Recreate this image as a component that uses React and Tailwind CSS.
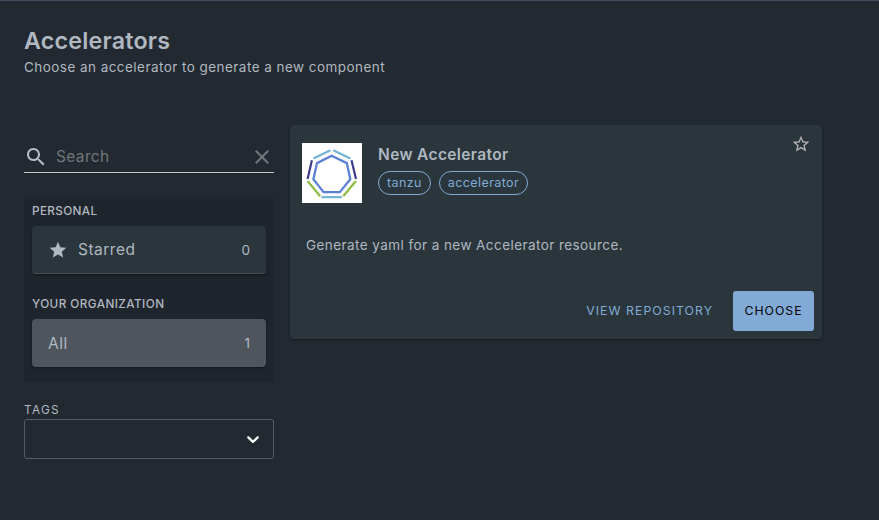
import React from 'react';

function SearchIcon() {
  return (
    <svg className="size-6 shrink-0 fill-[#b5bdc5]" viewBox="0 0 24 24">
      <path d="M15.5 14h-.79l-.28-.27C15.41 12.59 16 11.11 16 9.5 16 5.91 13.09 3 9.5 3S3 5.91 3 9.5 5.91 16 9.5 16c1.61 0 3.09-.59 4.23-1.57l.27.28v.79l5 4.99L20.49 19l-4.99-5zm-6 0C7.01 14 5 11.99 5 9.5S7.01 5 9.5 5 14 7.01 14 9.5 11.99 14 9.5 14z" />
    </svg>
  );
}

function ClearIcon() {
  return (
    <svg className="size-6 shrink-0 fill-[#70777d]" viewBox="0 0 24 24">
      <path d="M19 6.41L17.59 5 12 10.59 6.41 5 5 6.41 10.59 12 5 17.59 6.41 19 12 13.41 17.59 19 19 17.59 13.41 12z" />
    </svg>
  );
}

function StarIcon() {
  return (
    <svg className="size-5 shrink-0 fill-[#b0b8c1]" viewBox="0 0 24 24">
      <path d="M12 17.27L18.18 21l-1.64-7.03L22 9.24l-7.19-.61L12 2 9.19 8.63 2 9.24l5.46 4.73L5.82 21z" />
    </svg>
  );
}

function StarBorderIcon() {
  return (
    <svg className="size-5 shrink-0 fill-[#b3b3b3]" viewBox="0 0 24 24">
      <path d="M22 9.24l-7.19-.62L12 2 9.19 8.63 2 9.24l5.46 4.73L5.82 21 12 17.27 18.18 21l-1.63-7.03L22 9.24zM12 15.4l-3.76 2.27 1-4.28-3.32-2.88 4.38-.38L12 6.1l1.71 4.04 4.38.38-3.32 2.88 1 4.28L12 15.4z" />
    </svg>
  );
}

function ChevronIcon() {
  return (
    <svg className="size-5 shrink-0 fill-white" viewBox="0 0 20 20">
      <path d="M4.516 7.548c0.436-0.446 1.043-0.481 1.576 0l3.908 3.747 3.908-3.747c0.533-0.481 1.141-0.446 1.574 0 0.436 0.445 0.408 1.197 0 1.615-0.406 0.418-4.695 4.502-4.695 4.502-0.217 0.223-0.502 0.335-0.787 0.335s-0.57-0.112-0.789-0.335c0 0-4.287-4.084-4.695-4.502s-0.436-1.17 0-1.615z" />
    </svg>
  );
}

function TanzuLogo() {
  return (
    <svg className="size-[60px] shrink-0 bg-white" viewBox="0 0 60 60" fill="none" strokeWidth="2.2">
      <path d="M29.6 12.8L44.8 20.1L48.3 36.2L37.8 49.2H21.6L11.4 36.2L15 20.1Z" stroke="#5c80d6" strokeWidth="2.3" />
      <path d="M11.4 15.6L28.4 7.2M31.2 7.2L48.4 15.6M19.4 54.2H39.8" stroke="#73b5d2" />
      <path d="M9.9 17.2L5.6 36M49.5 17.2L54 36" stroke="#3c3c8c" />
      <path d="M5.6 38L18.2 53.2M53.9 38L41.2 53.2" stroke="#8fbb45" />
    </svg>
  );
}

function FilterItem({ icon, label, count, selected }) {
  return (
    <div
      className={
        selected
          ? 'flex h-12 items-center rounded bg-[#4e555d] px-4 shadow-[0_1px_2px_rgba(0,0,0,0.4)]'
          : 'flex h-12 items-center rounded border-b border-[#485158] bg-[#2a363c] px-4 shadow-[0_1px_2px_rgba(0,0,0,0.4)]'
      }
    >
      {icon && <span className="mr-[10px]">{icon}</span>}
      <span className="flex-1 pt-px text-[15.5px] tracking-[0.5px]">{label}</span>
      <span className="pt-px text-[13.5px]">{count}</span>
    </div>
  );
}

function Tag({ children }) {
  return (
    <span className="flex h-6 items-center rounded-full border border-[#81abd6] px-2 text-[12.5px] leading-none tracking-[0.4px] text-[#81abd6]">
      {children}
    </span>
  );
}

export default function App() {
  return (
    <div className="h-[520px] w-[879px] overflow-hidden border-t border-[#444e61] bg-[#222930] px-6 font-[Inter,sans-serif] text-[#b0b8c1]">
      <header className="pt-6">
        <h1 className="text-[23.25px] leading-8 font-semibold tracking-[0.2px]">Accelerators</h1>
        <p className="text-[13.5px] leading-5 tracking-[0.45px]">Choose an accelerator to generate a new component</p>
      </header>

      <div className="mt-12 flex items-start gap-4">
        <aside className="w-[250px] shrink-0">
          <div className="mt-4 flex h-8 items-center border-b border-[#c3c7ca]">
            <SearchIcon />
            <span className="ml-2 flex-1 pt-px text-[15.5px] tracking-[0.35px] text-[#70777d]">Search</span>
            <ClearIcon />
          </div>

          <div className="mt-6 h-[185px] rounded bg-[#1f252c] px-2">
            <h2 className="pt-1 pb-1 text-[11.75px] leading-[21px] font-medium tracking-[0.35px]">PERSONAL</h2>
            <FilterItem icon={<StarIcon />} label="Starred" count={0} />
            <h2 className="mt-5 pb-1 text-[11.75px] leading-[21px] font-medium tracking-[0.42px]">YOUR ORGANIZATION</h2>
            <FilterItem label="All" count={1} selected />
          </div>

          <div className="mt-5 text-[11.75px] leading-[17px] tracking-[1.3px]">TAGS</div>
          <div className="flex h-10 items-center justify-end rounded-[3px] border border-[#555c65] pr-[10px]">
            <ChevronIcon />
          </div>
        </aside>

        <article className="flex h-[214px] w-[532px] flex-col rounded bg-[#2a363c] shadow-[0_1px_2px_rgba(0,0,0,0.4)]">
          <div className="flex pt-[18px] pl-3">
            <TanzuLogo />
            <div className="ml-4 flex-1">
              <h3 className="text-[15.5px] leading-6 font-semibold tracking-[0.37px]">New Accelerator</h3>
              <div className="mt-1 flex gap-2">
                <Tag>tanzu</Tag>
                <Tag>accelerator</Tag>
              </div>
            </div>
            <div className="-mt-[9px] mr-[11px]">
              <StarBorderIcon />
            </div>
          </div>
          <p className="mt-8 pl-4 text-[13.5px] leading-5 tracking-[0.43px]">Generate yaml for a new Accelerator resource.</p>
          <div className="mt-auto mb-2 flex items-center justify-end gap-5 pr-2">
            <span className="text-[12.25px] tracking-[1.05px] text-[#81abd6]">VIEW REPOSITORY</span>
            <button className="h-10 w-[81px] rounded-[3px] bg-[#81abd6] text-[12.25px] tracking-[1px] text-black">CHOOSE</button>
          </div>
        </article>
      </div>
    </div>
  );
}
